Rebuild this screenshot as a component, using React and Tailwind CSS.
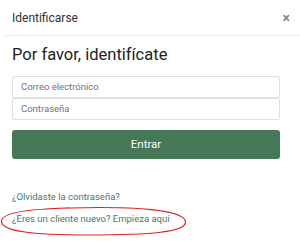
import React from "react";

export default function App() {
  return (
    <div className="relative w-[300px] h-[245px] bg-white overflow-hidden" style={{ fontFamily: "Roboto, 'Liberation Sans', sans-serif" }}>
      <div className="flex items-center justify-between pl-3 pr-[10px] h-[35px]">
        <span className="text-[12px] text-[#333]">Identificarse</span>
        <span className="text-[14px] font-bold text-[#888] leading-none">×</span>
      </div>
      <div className="ml-1 h-px bg-[#e9ecef]" />
      <div className="px-3 pt-[9px]">
        <h1 className="text-[16.5px] leading-[20px] text-[#222]">Por favor, identifícate</h1>
        <div className="mt-[11px] mr-[8px] flex flex-col">
          <div className="h-[22px] border border-[#dde1e5] rounded-[2px] flex items-center px-2 text-[9.5px] text-[#6c757d]">Correo electrónico</div>
          <div className="h-[22px] border border-[#dde1e5] rounded-[2px] flex items-center px-2 text-[9.5px] text-[#6c757d]">Contraseña</div>
        </div>
        <div className="mt-[10px] mr-[8px] h-[29px] rounded-[3px] bg-[#447857] flex items-center justify-center text-white text-[11.5px]">Entrar</div>
        <div className="mt-[31px] text-[9.5px] leading-[14px] text-[#4b7766]">¿Olvidaste la contraseña?</div>
        <div className="mt-[8px] text-[9.5px] leading-[14px] text-[#4b7766]">¿Eres un cliente nuevo? Empieza aquí</div>
      </div>
      <svg className="absolute left-0 top-[204px]" width="190" height="36" viewBox="0 0 190 36">
        <path d="M70 4 C 25 5, 2 9, 1.5 17 C 1 27, 30 31, 90 31 C 150 31, 186 28, 185.5 18 C 185 8, 150 3.5, 100 3.5 C 80 3.5, 62 4, 45 5" fill="none" stroke="#e02020" strokeWidth="1.2" />
      </svg>
    </div>
  );
}
